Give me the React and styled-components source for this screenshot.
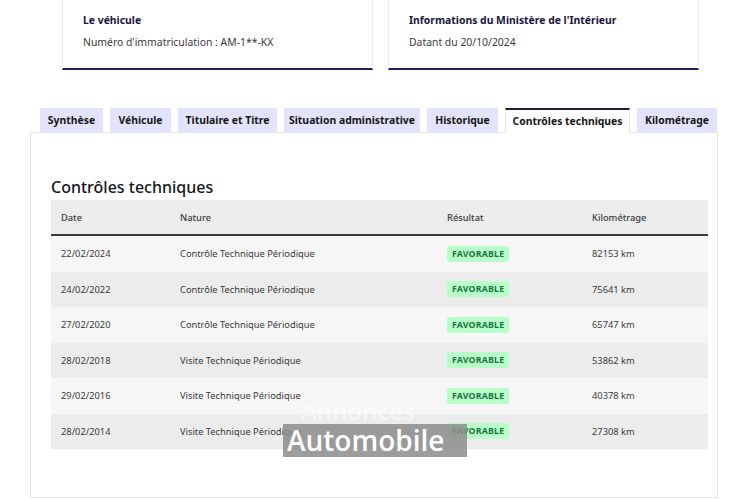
import React from "react";
import styled, { createGlobalStyle } from "styled-components";

const GlobalStyle = createGlobalStyle`
  body {
    margin: 0;
    background: #fff;
    font-family: "Noto Sans", "Liberation Sans", sans-serif;
    color: #3a3a3a;
  }
`;

const Page = styled.div`
  width: 750px;
  height: 500px;
  overflow: hidden;
  position: relative;
`;

const CardsRow = styled.div`
  display: flex;
  gap: 15px;
  padding-left: 62px;
`;

const Card = styled.div`
  width: 289px;
  height: 55px;
  padding: 13px 0 0 20px;
  background: #fff;
  border-left: 1px solid #ececec;
  border-right: 1px solid #ececec;
  border-bottom: 2px solid #1f1f5e;
`;

const CardTitle = styled.div`
  font-size: 10.4px;
  font-weight: 700;
  color: #161640;
  line-height: 15px;
`;

const CardText = styled.div`
  margin-top: 7px;
  font-size: 10.4px;
  color: #3a3a3a;
  line-height: 15px;
`;

const Tabs = styled.div`
  display: flex;
  gap: 7px;
  margin: 38px 0 0 40px;
`;

const Tab = styled.div`
  width: ${(p) => p.$w}px;
  box-sizing: border-box;
  display: flex;
  align-items: center;
  justify-content: center;
  padding-bottom: 2px;
  white-space: nowrap;
  font-size: 10.4px;
  font-weight: 700;
  color: #161616;
  background: ${(p) => (p.$active ? "#fff" : "#e3e3fd")};
  border-top: 2px solid ${(p) => (p.$active ? "#1f1f3a" : "#e3e3fd")};
  border-left: ${(p) => (p.$active ? "1px solid #e5e5e5" : "none")};
  border-right: ${(p) => (p.$active ? "1px solid #e5e5e5" : "none")};
  margin-bottom: ${(p) => (p.$active ? "-1px" : "0")};
  position: relative;
  z-index: 1;
  height: ${(p) => (p.$active ? "25px" : "24px")};
`;

const Panel = styled.div`
  margin-left: 30px;
  width: 688px;
  height: 366px;
  box-sizing: border-box;
  border: 1px solid #e5e5e5;
  padding: 43px 10px 0 20px;
`;

const Heading = styled.h2`
  margin: 0 0 2px;
  font-size: 16px;
  font-weight: 500;
  color: #161616;
  line-height: 22px;
`;

const Table = styled.div`
  width: 657px;
`;

const Row = styled.div`
  display: grid;
  grid-template-columns: 119px 267px 145px 1fr;
  align-items: center;
  height: ${(p) => (p.$head ? "34px" : "35.5px")};
  padding-left: 10px;
  font-size: 9.3px;
  color: #3a3a3a;
  background: ${(p) => p.$bg};
  border-bottom: ${(p) => (p.$head ? "2px solid #3a3a3a" : "none")};
  font-weight: ${(p) => (p.$head ? 500 : 400)};
`;

const Badge = styled.span`
  justify-self: start;
  background: #b8fec9;
  color: #18753c;
  font-weight: 700;
  font-size: 8.8px;
  padding: 2px 5px;
  border-radius: 2px;
  letter-spacing: 0.2px;
`;

const Watermark = styled.div`
  position: absolute;
  left: 283px;
  top: 397px;
  font-family: "Open Sans", "Noto Sans", sans-serif;
  font-weight: 600;
  color: #fff;
  pointer-events: none;
`;

const WatermarkTop = styled.div`
  font-size: 24px;
  line-height: 27px;
  padding-left: 18px;
  opacity: 0.55;
`;

const WatermarkBox = styled.div`
  background: rgba(140, 140, 140, 0.85);
  font-size: 28px;
  line-height: 33px;
  padding: 0 4px;
  width: 176px;
`;

const rows = [
  ["22/02/2024", "Contrôle Technique Périodique", "82153 km"],
  ["24/02/2022", "Contrôle Technique Périodique", "75641 km"],
  ["27/02/2020", "Contrôle Technique Périodique", "65747 km"],
  ["28/02/2018", "Visite Technique Périodique", "53862 km"],
  ["29/02/2016", "Visite Technique Périodique", "40378 km"],
  ["28/02/2014", "Visite Technique Périodique", "27308 km"],
];

const tabs = [
  ["Synthèse", 63],
  ["Véhicule", 61],
  ["Titulaire et Titre", 99],
  ["Situation administrative", 136],
  ["Historique", 71],
  ["Contrôles techniques", 125],
  ["Kilométrage", 80],
];

export default function App() {
  return (
    <Page>
      <GlobalStyle />
      <CardsRow>
        <Card>
          <CardTitle>Le véhicule</CardTitle>
          <CardText>Numéro d'immatriculation : AM-1**-KX</CardText>
        </Card>
        <Card>
          <CardTitle>Informations du Ministère de l'Intérieur</CardTitle>
          <CardText>Datant du 20/10/2024</CardText>
        </Card>
      </CardsRow>
      <Tabs>
        {tabs.map(([t, w]) => (
          <Tab key={t} $w={w} $active={t === "Contrôles techniques"}>
            {t}
          </Tab>
        ))}
      </Tabs>
      <Panel>
        <Heading>Contrôles techniques</Heading>
        <Table>
          <Row $head $bg="#ececec">
            <span>Date</span>
            <span>Nature</span>
            <span>Résultat</span>
            <span>Kilométrage</span>
          </Row>
          {rows.map((r, i) => (
            <Row key={r[0]} $bg={i % 2 === 0 ? "#f6f6f6" : "#ececec"}>
              <span>{r[0]}</span>
              <span>{r[1]}</span>
              <Badge>FAVORABLE</Badge>
              <span>{r[2]}</span>
            </Row>
          ))}
        </Table>
      </Panel>
      <Watermark>
        <WatermarkTop>Annonces</WatermarkTop>
        <WatermarkBox>Automobile</WatermarkBox>
      </Watermark>
    </Page>
  );
}
